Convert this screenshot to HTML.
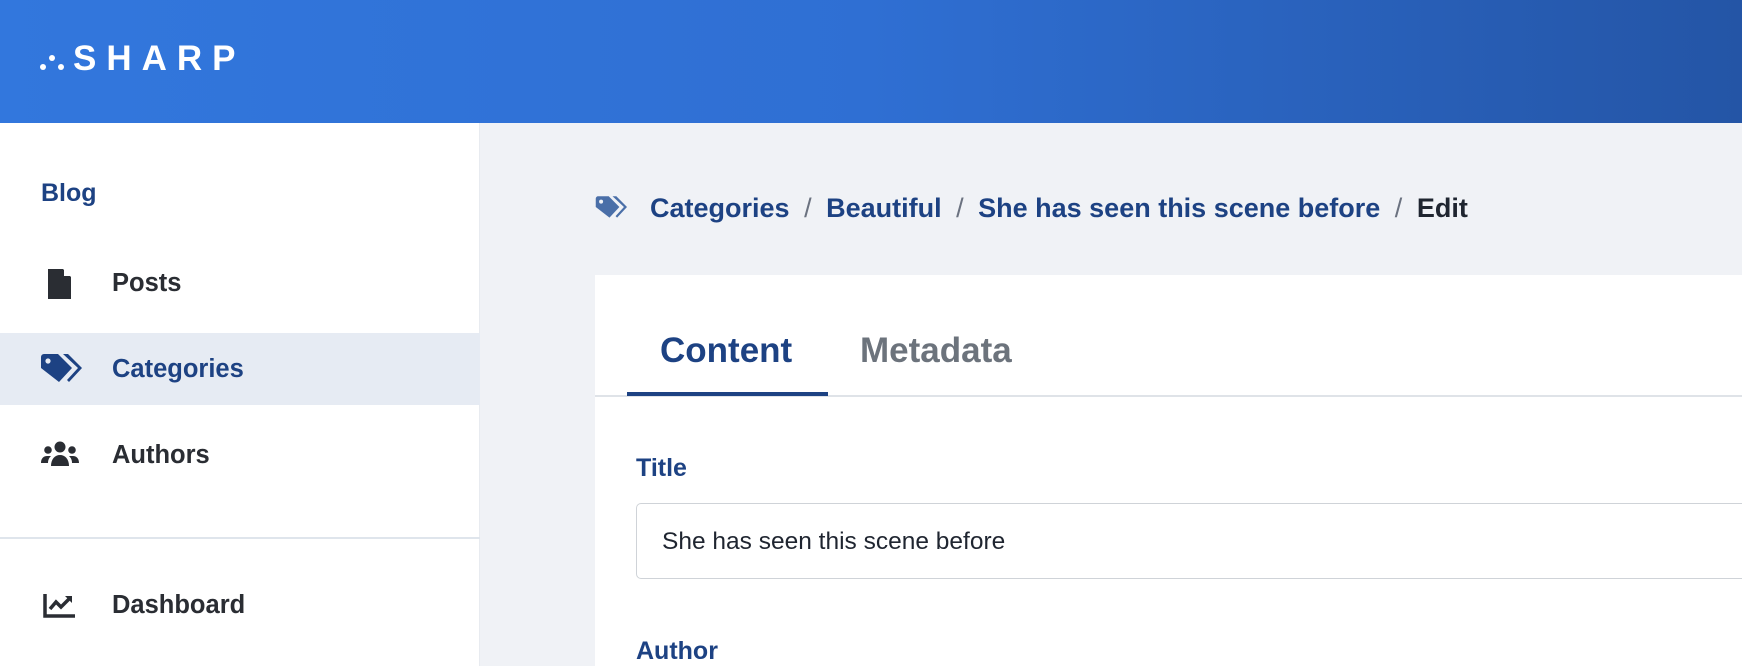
<!DOCTYPE html>
<html><head><meta charset="utf-8"><style>
*{margin:0;padding:0;box-sizing:border-box}
body{width:1742px;height:666px;overflow:hidden;font-family:"Liberation Sans",sans-serif;background:#f0f2f6;position:relative}
.hdr{position:absolute;left:0;top:0;width:1742px;height:123px;background:linear-gradient(90deg,#3277dd 0%,#2f6fd3 50%,#2455a6 100%)}
.logo{position:absolute;left:73px;top:39px;color:#fff;font-size:35px;font-weight:bold;letter-spacing:10px;line-height:40px}
.side{position:absolute;left:0;top:123px;width:480px;height:543px;background:#fff;border-right:1px solid #e8ebf0}
.item{position:absolute;left:0;width:480px;height:72px;font-size:25.5px;font-weight:bold;color:#2a2d33}
.item span{position:absolute;left:112px;top:22px}
.item svg{position:absolute;left:40px;top:20px}
.t{position:absolute;font-weight:bold}
.card{position:absolute;left:595px;top:275px;width:1147px;height:391px;background:#fff}
</style></head><body>
<div class="hdr">
<svg style="position:absolute;left:40px;top:55px" width="24" height="16"><circle cx="3" cy="12" r="3" fill="#fff"/><circle cx="12" cy="3" r="3" fill="#fff"/><circle cx="21" cy="12" r="3" fill="#fff"/></svg>
<div class="logo">SHARP</div>
</div>
<div class="side">
<div class="t" style="left:41px;top:56px;font-size:25px;color:#1d4283">Blog</div>
<div class="item" style="top:124px"><svg width="40" height="34" viewBox="0 0 40 34"><path d="M8 2h15l8 8v22H8z" fill="#2a2d33"/><path d="M24 2v7h7" fill="#fff"/></svg><span>Posts</span></div>
<div class="item" style="top:210px;background:#e6ebf3;color:#1d4283"><svg width="42" height="34" viewBox="0 0 42 34"><path d="M1 4a3 3 0 0 1 3-3h14l14 14-13 14L1 15z" fill="#1d4283"/><circle cx="8" cy="8" r="2.6" fill="#e6ebf3"/><path d="M23 1h5l14 14-13 14-2-2 11-12z" fill="#1d4283"/></svg><span>Categories</span></div>
<div class="item" style="top:296px"><svg width="42" height="34" viewBox="0 0 42 34"><circle cx="20" cy="8" r="5.5" fill="#2a2d33"/><circle cx="8" cy="11" r="3.8" fill="#2a2d33"/><circle cx="32" cy="11" r="3.8" fill="#2a2d33"/><path d="M11 27c0-7 4-11 9-11s9 4 9 11z" fill="#2a2d33"/><path d="M1 24c0-5 3-7 6-7h4c-2 2-3 4-3 7z M39 24c0-5-3-7-6-7h-4c2 2 3 4 3 7z" fill="#2a2d33"/></svg><span>Authors</span></div>
<div style="position:absolute;left:0;top:414px;width:480px;height:2px;background:#dfe5ec"></div>
<div class="item" style="top:446px"><svg width="40" height="34" viewBox="0 0 40 34"><path d="M5 5v22h30" fill="none" stroke="#2a2d33" stroke-width="3.5"/><path d="M10 20l6-7 5 5 9-9" fill="none" stroke="#2a2d33" stroke-width="3.5"/><path d="M25 7h7v7z" fill="#2a2d33"/></svg><span>Dashboard</span></div>
</div>
<svg style="position:absolute;left:595px;top:195px" width="32" height="27" viewBox="0 0 42 34"><path d="M1 4a3 3 0 0 1 3-3h14l14 14-13 14L1 15z" fill="#4a6fa8"/><circle cx="8" cy="8" r="2.6" fill="#f0f2f6"/><path d="M23 1h5l14 14-13 14-2-2 11-12z" fill="#4a6fa8"/></svg>
<div class="t" style="left:650px;top:193px;font-size:27px;color:#1d4283;white-space:nowrap">Categories <span style="color:#6b7280;font-weight:normal;margin:0 7px">/</span> Beautiful <span style="color:#6b7280;font-weight:normal;margin:0 7px">/</span> She has seen this scene before <span style="color:#6b7280;font-weight:normal;margin:0 7px">/</span> <span style="color:#1f2530">Edit</span></div>
<div class="card">
<div class="t" style="left:65px;top:56px;font-size:35px;color:#1d4283">Content</div>
<div class="t" style="left:265px;top:56px;font-size:35px;color:#6c737c">Metadata</div>
<div style="position:absolute;left:0;top:120px;width:1147px;height:2px;background:#dfe3e8"></div>
<div style="position:absolute;left:32px;top:117px;width:201px;height:4px;background:#1d4283"></div>
<div class="t" style="left:41px;top:179px;font-size:25px;color:#1d4283">Title</div>
<div style="position:absolute;left:41px;top:228px;width:1130px;height:76px;border:1.5px solid #cfd3d8;border-radius:5px"></div>
<div style="position:absolute;left:67px;top:253px;font-size:24.5px;color:#1f2530">She has seen this scene before</div>
<div class="t" style="left:41px;top:362px;font-size:25px;color:#1d4283">Author</div>
</div>
</body></html>
